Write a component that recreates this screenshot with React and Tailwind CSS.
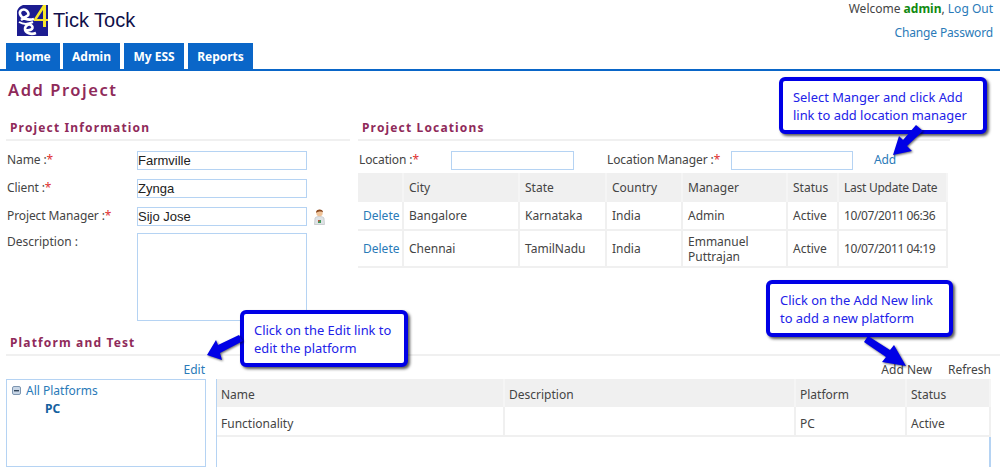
const font = { fontFamily: '"Noto Sans", "Open Sans", sans-serif' };

function Logo() {
  return (
    <svg width="32" height="31" viewBox="0 0 32 31" className="shrink-0">
      <rect x="0" y="0" width="31" height="31" fill="#1c1c90" />
      <path d="M0 0 H6 C3 1 1 3 0 6 Z" fill="#fff" />
      <path d="M17 14 C11 16 4 13 3 9 C2 5 7 3 10 6 C12 8 12 10 10 11 L4 15" stroke="#fff" strokeWidth="2.6" fill="none" />
      <path d="M2 17 C7 20 12 19 16 17" stroke="#fff" strokeWidth="2" fill="none" />
      <path d="M19 28 C14 30 8 28 8 24 C8 20 13 18 15 21 C17 24 13 26 8 25" stroke="#fff" strokeWidth="2.6" fill="none" />
      <path d="M26 0 L17 14 V16 H31 V14 H20 L26 5 V22 H29 V0 Z" fill="#f7e62b" />
    </svg>
  );
}

function Person() {
  return (
    <svg width="13" height="17" viewBox="0 0 13 17" className="shrink-0">
      <path d="M1.5 16.5 L2 10 C3 8 10 8 11 10 L11.5 16.5 Z" fill="#dfe3e6" stroke="#a8adb2" strokeWidth="0.5" />
      <circle cx="6.5" cy="5" r="3.2" fill="#f0c49a" />
      <path d="M3 5 C2.5 0.5 10.5 0.5 10 4.5 C9 3 5 3 3 5 Z" fill="#8a4a22" />
      <path d="M5 12 h3 v3 h-3 Z" fill="#3f9a5a" />
      <path d="M5 12 h1.5 v1.5 h-1.5 Z" fill="#d84a3a" />
    </svg>
  );
}

function Heading({ children, className = '' }) {
  return (
    <div className={`h-[21px] border-b-2 border-[#f0f0f0] text-[12px] font-bold tracking-[1.15px] leading-[16px] text-[#8f2a5a] pl-[4px] ${className}`}>
      {children}
    </div>
  );
}

function Req() {
  return <span className="text-[#e03030]">*</span>;
}

function Field({ value = '', className = '' }) {
  return (
    <div
      className={`h-[19px] border border-[#b5d3f3] bg-white text-[13px] leading-[17px] text-[#222] ${className}`}
      style={{ fontFamily: '"Liberation Sans", sans-serif' }}
    >
      {value}
    </div>
  );
}

function FormRow({ label, value, icon }) {
  return (
    <div className="flex items-center h-[28px]">
      <div className="w-[131px] pl-[1px] text-[#444] tracking-[-0.1px]">{label} :<Req /></div>
      <Field value={value} className="w-[170px]" />
      {icon && <div className="ml-[6px]"><Person /></div>}
    </div>
  );
}

const th = 'bg-[#f0f0f0] border-r-2 border-[#f5f5f5] font-normal text-left align-middle px-[5px] text-[#444] whitespace-nowrap';
const td = 'border-r-2 border-b-2 border-[#f0f0f0] text-left align-middle px-[5px] text-[#444] leading-[15px]';
const thP = 'bg-[#f0f0f0] border-r-2 border-[#f5f5f5] font-normal text-left align-middle pl-[4px] pt-[3px] text-[#444]';
const tdP = 'border-r-2 border-b-2 border-[#f0f0f0] text-left align-middle pl-[4px] pt-[5px] text-[#444]';

function LocationsTable() {
  const rows = [
    ['Bangalore', 'Karnataka', 'India', 'Admin', 'Active', '10/07/2011 06:36', 'h-[28px]'],
    ['Chennai', 'TamilNadu', 'India', 'Emmanuel Puttrajan', 'Active', '10/07/2011 04:19', 'h-[37px]'],
  ];
  return (
    <table className="table-fixed w-[589px] border-collapse text-[12px]">
      <colgroup>
        <col className="w-[45px]" /><col className="w-[116px]" /><col className="w-[87px]" /><col className="w-[76px]" />
        <col className="w-[105px]" /><col className="w-[51px]" /><col className="w-[109px]" />
      </colgroup>
      <thead>
        <tr className="h-[29px]">
          <th className={th}></th><th className={th}>City</th><th className={th}>State</th><th className={th}>Country</th>
          <th className={th}>Manager</th><th className={th}>Status</th><th className={th}><span className="tracking-[-0.25px]">Last Update Date</span></th>
        </tr>
      </thead>
      <tbody>
        {rows.map((r) => (
          <tr key={r[0]} className={r[6]}>
            <td className={td}><span className="text-[#2a7ab8]">Delete</span></td>
            {r.slice(0, 5).map((c) => <td key={c + r[0]} className={td}>{c}</td>)}
            <td className={`${td} whitespace-nowrap`}><span className="tracking-[-0.4px]">{r[5]}</span></td>
          </tr>
        ))}
      </tbody>
    </table>
  );
}

function PlatformTable() {
  return (
    <div className="w-[775px] h-[88px] border-l border-r-2 border-[#b5d3f3]">
      <table className="table-fixed w-full border-collapse text-[12px]">
        <colgroup>
          <col className="w-[287px]" /><col className="w-[291px]" /><col className="w-[111px]" /><col className="w-[84px]" />
        </colgroup>
        <thead>
          <tr className="h-[28px]">
            <th className={thP}>Name</th><th className={thP}>Description</th><th className={thP}>Platform</th><th className={thP}>Status</th>
          </tr>
        </thead>
        <tbody>
          <tr className="h-[29px]">
            <td className={tdP}>Functionality</td><td className={tdP}></td><td className={tdP}>PC</td><td className={tdP}>Active</td>
          </tr>
        </tbody>
      </table>
    </div>
  );
}

function Callout({ lines, className }) {
  return (
    <div className={`absolute border-[4px] border-[#0000e6] rounded-[6px] bg-white shadow-[2px_2px_3px_rgba(0,0,0,0.65)] text-[12.9px] leading-[18px] text-[#2222e8] pl-[10px] flex flex-col justify-center ${className}`}>
      {lines.map((l) => <div key={l} className="whitespace-nowrap">{l}</div>)}
    </div>
  );
}

function Arrow({ className, width, height, points }) {
  return (
    <svg className={`absolute ${className}`} width={width} height={height} viewBox={`0 0 ${width} ${height}`} style={{ filter: 'drop-shadow(1px 1px 1px rgba(0,0,0,0.6))' }}>
      <polygon points={points} fill="#0000e6" />
    </svg>
  );
}

export default function App() {
  return (
    <div className="relative w-[1000px] h-[467px] overflow-hidden bg-white text-[12px] text-[#444]" style={font}>
      <header className="relative h-[71px] border-b-2 border-[#0a66c8]">
        <div className="flex items-center pl-[17px] pt-[5px] gap-[4px]">
          <Logo />
          <span className="text-[20px] leading-[31px] text-[#10104a]" style={{ fontFamily: '"Liberation Sans", sans-serif' }}>Tick Tock</span>
        </div>
        <div className="absolute right-[7px] top-0 text-right text-[12px]">
          <div className="leading-[17px] text-[#444]">Welcome <b className="text-[#108a10]">admin</b>, <span className="text-[#2a7ab8]">Log Out</span></div>
          <div className="mt-[7px] leading-[17px] text-[#2a7ab8] tracking-[-0.15px]">Change Password</div>
        </div>
        <nav className="absolute left-[6px] bottom-0 flex gap-[3px] text-[12px] font-bold text-white">
          <div className="w-[54px] h-[26px] pt-[1px] bg-[#0a66c8] flex items-center justify-center">Home</div>
          <div className="w-[57px] h-[26px] pt-[1px] bg-[#0a66c8] flex items-center justify-center">Admin</div>
          <div className="w-[60px] h-[26px] pt-[1px] ml-[1px] bg-[#0a66c8] flex items-center justify-center">My ESS</div>
          <div className="w-[65px] h-[26px] pt-[1px] ml-[1px] bg-[#0a66c8] flex items-center justify-center">Reports</div>
        </nav>
      </header>

      <h1 className="pl-[8px] pt-[7px] h-[49px] text-[16.5px] font-semibold leading-[24px] tracking-[1.55px] text-[#8f2a5a]">Add Project</h1>

      <div className="flex pl-[6px] h-[206px]">
        <section className="w-[344px]">
          <Heading>Project Information</Heading>
          <div className="pt-[5px]">
            <FormRow label="Name" value="Farmville" />
            <FormRow label="Client" value="Zynga" />
            <FormRow label="Project Manager" value="Sijo Jose" icon />
            <div className="flex mt-[3px]">
              <div className="w-[131px] pl-[1px] text-[#444]">Description :</div>
              <div className="w-[170px] h-[88px] border border-[#b5d3f3]" />
            </div>
          </div>
        </section>
        <section className="ml-[8px] w-[592px]">
          <Heading>Project Locations</Heading>
          <div className="flex items-center h-[32px] pt-[6px] tracking-[-0.1px]">
            <div className="w-[93px] pl-[1px]">Location :<Req /></div>
            <Field className="w-[123px]" />
            <div className="w-[124px] ml-[33px]">Location Manager :<Req /></div>
            <Field className="w-[122px]" />
            <span className="ml-[21px] text-[#2a7ab8]">Add</span>
          </div>
          <LocationsTable />
        </section>
      </div>

      <section className="pl-[6px]">
        <Heading className="mt-[9px]">Platform and Test</Heading>
        <div className="flex">
          <div className="w-[200px]">
            <div className="h-[23px] pr-[1px] pt-[5px] text-right leading-[17px] text-[#2a7ab8]">Edit</div>
            <div className="h-[88px] border border-[#b5d3f3] pl-[5px] pt-[2px]">
              <div className="flex items-center gap-[5px] leading-[17px] text-[#2a7ab8]">
                <svg width="9" height="9" viewBox="0 0 9 9">
                  <rect x="0.5" y="0.5" width="8" height="8" rx="1.5" fill="#c8d6e6" stroke="#7e96b0" />
                  <rect x="2" y="4" width="5" height="1.4" fill="#33475c" />
                </svg>
                All Platforms
              </div>
              <div className="pl-[33px] mt-[1px] font-bold text-[#14609e] leading-[17px]">PC</div>
            </div>
          </div>
          <div className="ml-[10px]">
            <div className="h-[23px] pt-[5px] flex justify-end gap-[16px] leading-[17px] text-[#444]">
              <span>Add New</span><span>Refresh</span>
            </div>
            <PlatformTable />
          </div>
        </div>
      </section>

      <Callout className="left-[779px] top-[77px] w-[208px] h-[57px]" lines={['Select Manger and click Add', 'link to add location manager']} />
      <Arrow className="left-[893px] top-[124px]" width={30} height={32} points="23,1 30,7 14,22 19,27 0,31 6,12 10,16" />

      <Callout className="left-[240px] top-[310px] w-[168px] h-[57px]" lines={['Click on the Edit link to', 'edit the platform']} />
      <Arrow className="left-[207px] top-[335px]" width={36} height={26} points="32,0 36,6 13,18 15,25 0,20 9,5 11,10" />

      <Callout className="left-[766px] top-[280px] w-[187px] h-[57px]" lines={['Click on the Add New link', 'to add a new platform']} />
      <Arrow className="left-[864px] top-[336px]" width={42} height={30} points="4,0 26,14 30,9 42,30 18,26 22,21 0,6" />
    </div>
  );
}
